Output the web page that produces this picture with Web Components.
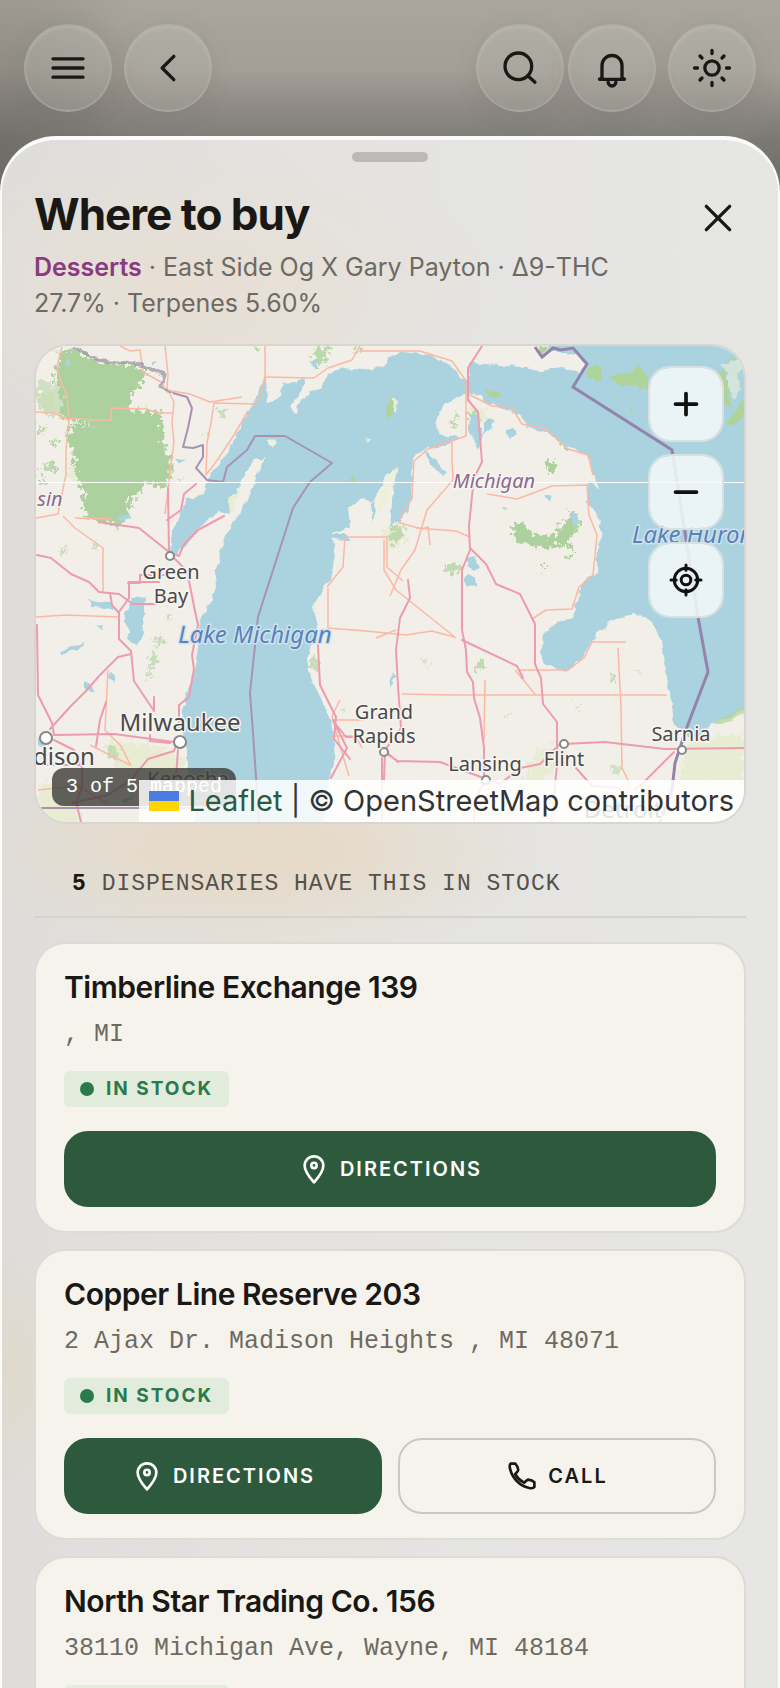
<!DOCTYPE html>
<html lang="en">
<head>
<meta charset="utf-8">
<meta name="viewport" content="width=device-width, initial-scale=1">
<title>Where to buy</title>
<style>
  :root {
    --ink: #1a1815;
    --muted: #6e6a62;
    --green: #2d5a3d;
    --card: #f6f3ec;
    --line: #dedbd5;
    --mono: "Liberation Mono", monospace;
  }
  body {
    margin: 0;
    font-family: Inter, sans-serif;
    color: var(--ink);
  }
</style>
</head>
<body>
<app-shell>
  <top-bar slot="bar"></top-bar>
  <buy-sheet heading="Where to buy">
    <span slot="summary"><strong>Desserts</strong> · East Side Og X Gary Payton · Δ9-THC 27.7% · Terpenes 5.60%</span>
    <store-map></store-map>
    <stock-count count="5">dispensaries have this in stock</stock-count>
    <store-card name="Timberline Exchange 139" address=", MI"></store-card>
    <store-card name="Copper Line Reserve 203" address="2 Ajax Dr. Madison Heights , MI 48071" phone="tel:203"></store-card>
    <store-card name="North Star Trading Co. 156" address="38110 Michigan Ave, Wayne, MI 48184" phone="tel:156"></store-card>
  </buy-sheet>
</app-shell>

<script>
const ICONS = {
  menu: '<path d="M3 6.5h18M3 12h18M3 17.500h18"/>',
  back: '<path d="M15.500 5l-7 7 7 7"/>',
  search: '<circle cx="11" cy="11" r="8"/><path d="M16.800 16.800L21 20.500"/>',
  bell: '<path d="M6 18V10.500a6 6 0 0 1 12 0V18l1.500 0.800h-15z"/><path d="M9.700 20.500a2.300 2.300 0 0 0 4.600 0"/>',
  sun: '<circle cx="12" cy="12" r="4.300"/><path d="M12 1.500v1.800M12 20.700v1.800M1.500 12h1.800M20.700 12h1.800M4.800 4.800L6 6M18 18l1.200 1.200M4.800 19.200L6 18M18 6l1.200-1.200"/>',
  close: '<path d="M5 5l14 14M19 5L5 19"/>',
  plus: '<path d="M12 5v14M5 12h14"/>',
  minus: '<path d="M5 12h14"/>',
  locate: '<circle cx="12" cy="12" r="7.800"/><circle cx="12" cy="12" r="3.200"/><path d="M12 2v3.500M12 18.500V22M2 12h3.500M18.500 12H22"/>',
  pin: '<path d="M12 22C8 17.500 5 13.500 5 9.500a7 7 0 0 1 14 0c0 4-3 8-7 12.500z"/><circle cx="12" cy="9.300" r="2"/>',
  phone: '<path d="M3.500 2.700H7C8.300 4 8.900 5.700 9.200 7.400C9 8.900 7.500 9.500 6.900 10.500C8.500 13.400 10.800 15.600 13.600 17C14.800 16.500 15.200 14.900 16.600 14.700C18.500 15 20 15.500 21.300 16.700V20.300C20.500 21.400 19 21.300 17.500 21C10.400 19.400 4.700 13.800 3 6.500C2.700 5 2.500 3.500 3.500 2.700z"/>'
};

class UiIcon extends HTMLElement {
  constructor() {
    super();
    this.attachShadow({mode: "open"});
  }

  connectedCallback() {
    const width = this.getAttribute("stroke") || 2;
    this.shadowRoot.innerHTML = `
      <style>
        :host { display: block; flex: none; width: 32px; height: 32px; }
        svg { display: block; width: 100%; height: 100%; overflow: visible; }
      </style>
      <svg viewBox="0 0 24 24" fill="none" stroke="currentColor" stroke-width="${width}"
           stroke-linecap="round" stroke-linejoin="round" aria-hidden="true">${ICONS[this.getAttribute("name")]}</svg>`;
  }
}
customElements.define("ui-icon", UiIcon);

class AppShell extends HTMLElement {
  constructor() {
    super();
    this.attachShadow({mode: "open"}).innerHTML = `
      <style>
        :host {
          display: flex;
          flex-direction: column;
          height: 100vh;
          overflow: hidden;
          background:
            radial-gradient(ellipse 160px 260px at 0 150px, rgba(85, 84, 78, .35), transparent),
            radial-gradient(ellipse 60px 90px at 100% 190px, rgba(70, 69, 64, .2), transparent),
            linear-gradient(#aaa69d 0, #a39e96 70px, #8f8b84 108px, #7f7d77 140px, #77756f 200px);
        }
        ::slotted(buy-sheet) { flex: 1; min-height: 0; }
      </style>
      <slot name="bar"></slot>
      <slot></slot>`;
  }
}
customElements.define("app-shell", AppShell);

class TopBar extends HTMLElement {
  constructor() {
    super();
    this.attachShadow({mode: "open"}).innerHTML = `
      <style>
        :host { display: block; padding: 24px; }
        nav { display: flex; align-items: center; gap: 12px; }
        .pair { display: flex; gap: 4px; margin-left: auto; }
        button {
          display: grid;
          place-items: center;
          width: 88px;
          height: 88px;
          padding: 0;
          border: 2px solid rgba(190, 190, 184, .3);
          border-radius: 50%;
          background: linear-gradient(rgba(190, 190, 182, .4), rgba(175, 173, 166, .35));
          box-shadow: inset 0 2px 2px rgba(200, 202, 198, .25), 0 6px 24px rgba(80, 78, 72, .12);
          color: var(--ink);
        }
        ui-icon { width: 40px; height: 40px; }
      </style>
      <nav>
        <button type="button" aria-label="Menu"><ui-icon name="menu"></ui-icon></button>
        <button type="button" aria-label="Back"><ui-icon name="back"></ui-icon></button>
        <div class="pair">
          <button type="button" aria-label="Search"><ui-icon name="search"></ui-icon></button>
          <button type="button" aria-label="Notifications"><ui-icon name="bell"></ui-icon></button>
        </div>
        <button type="button" aria-label="Theme"><ui-icon name="sun"></ui-icon></button>
      </nav>`;
  }
}
customElements.define("top-bar", TopBar);

class BuySheet extends HTMLElement {
  constructor() {
    super();
    this.attachShadow({mode: "open"});
  }

  connectedCallback() {
    this.shadowRoot.innerHTML = `
      <style>
        :host {
          display: block;
          box-sizing: border-box;
          overflow: hidden;
          padding: 12px 32px 0;
          border: 2px solid #fbfbfa;
          border-top-width: 4px;
          border-bottom: 0;
          border-radius: 56px 56px 0 0;
          background:
            radial-gradient(ellipse 300px 110px at 250px 710px, #e6dac8 20%, rgba(230, 218, 200, 0)),
            radial-gradient(ellipse 320px 150px at 180px 150px, #e8dfd4 0%, rgba(232, 223, 212, 0)),
            radial-gradient(ellipse 60px 140px at 10px 1230px, #e0d9cc, rgba(224, 217, 204, 0)),
            linear-gradient(90deg, #dedddb 0, #e4e3e0 40%, #e6e6e5 100%);
        }
        .handle {
          width: 76px;
          height: 10px;
          margin: 0 auto 26px;
          border-radius: 5px;
          background: #bcbab7;
        }
        header { display: flex; align-items: center; justify-content: space-between; }
        h1 {
          margin: 0;
          font-size: 44px;
          line-height: 52px;
          font-weight: 700;
          letter-spacing: -1px;
        }
        .close {
          display: grid;
          place-items: center;
          width: 56px;
          height: 52px;
          padding: 8px 0 0;
          border: 0;
          background: none;
          color: inherit;
        }
        .close ui-icon { width: 40px; height: 40px; }
        .summary {
          max-width: 600px;
          margin: 9px 0 23px;
          font-size: 25px;
          line-height: 36px;
          color: var(--muted);
        }
        ::slotted(store-card) { margin-bottom: 16px; }
      </style>
      <div class="handle"></div>
      <header>
        <h1>${this.getAttribute("heading")}</h1>
        <button type="button" class="close" aria-label="Close"><ui-icon name="close"></ui-icon></button>
      </header>
      <p class="summary"><slot name="summary"></slot></p>
      <slot></slot>`;
    const strong = this.querySelector("strong");
    if (strong) strong.style.cssText = "font-weight:600;color:#8a3a80";
  }
}
customElements.define("buy-sheet", BuySheet);

// The drawing uses one unit per CSS pixel at the 780px layout.
class StoreMap extends HTMLElement {
  constructor() {
    super();
    this.attachShadow({mode: "open"});
  }

  connectedCallback() {
    this.shadowRoot.innerHTML = `
      <style>
        :host {
          display: block;
          position: relative;
          box-sizing: border-box;
          height: 480px;
          overflow: hidden;
          border: 2px solid #d9d6d0;
          border-radius: 34px;
          background: #f2efe9;
        }
        svg.tiles { display: block; width: 100%; height: 100%; }
        .tiles text {
          font-family: "Noto Sans", sans-serif;
          fill: #4a4a4a;
          stroke: #f7f5f1;
          stroke-width: 3px;
          stroke-linejoin: round;
          paint-order: stroke;
          text-anchor: middle;
        }
        .tiles .state { font-style: italic; fill: #8a6a90; }
        .tiles .lake { font-style: italic; fill: #5b80bb; stroke: #cfe4ec; }
        .tiles .start { text-anchor: start; }
        .controls {
          position: absolute;
          top: 20px;
          right: 20px;
          display: grid;
          gap: 12px;
        }
        .controls button {
          display: grid;
          place-items: center;
          width: 76px;
          height: 76px;
          padding: 0;
          border: 2px solid #d8e0e0;
          border-radius: 22px;
          background: rgba(247, 250, 252, .84);
          background-clip: padding-box;
          color: #111;
        }
        .controls ui-icon { width: 36px; height: 36px; }
        .chip {
          position: absolute;
          left: 16px;
          bottom: 16px;
          padding: 0 14px;
          border-radius: 12px;
          background: rgba(60, 59, 56, .8);
          color: #fff;
          font: 20px/38px var(--mono);
        }
        .credit {
          position: absolute;
          right: 0;
          bottom: 0;
          display: flex;
          align-items: center;
          padding: 0 10px;
          background: rgba(255, 255, 255, .84);
          color: #333;
          font-size: 29px;
          line-height: 42px;
          white-space: pre;
        }
        .credit a { color: inherit; text-decoration: none; }
        .credit .leaflet { color: var(--green); }
        .flag {
          width: 30px;
          height: 20px;
          margin-right: 9px;
          background: linear-gradient(#4c7be1 50%, #ffd500 50%);
        }
      </style>
      <svg class="tiles" viewBox="36 346 708 476" preserveAspectRatio="xMidYMid slice" role="img" aria-label="Map of Michigan">
        <defs>
          <filter id="coast" x="0" y="0" width="1" height="1">
            <feTurbulence type="fractalNoise" baseFrequency=".12" numOctaves="2" seed="4"/>
            <feDisplacementMap in="SourceGraphic" scale="6" xChannelSelector="R" yChannelSelector="G"/>
          </filter>
          <filter id="woods" x="-.1" y="-.1" width="1.2" height="1.2">
            <feTurbulence type="fractalNoise" baseFrequency=".2" numOctaves="3" seed="9"/>
            <feDisplacementMap in="SourceGraphic" scale="18" xChannelSelector="R" yChannelSelector="G"/>
          </filter>
        </defs>
        <rect x="-200" y="200" width="1200" height="800" fill="#f2efe9"/>

        <g filter="url(#woods)">
          <g fill="#e4eccb" opacity=".7">
            <path d="M104 742l22-2 34 8 26 12-4 16-36 4-30-10zM40 780l40 10v32H40zM690 740l54-6v50l-66 2zM536 750l22-4 2 14-24 30-16 2zM38 390l14 4 6 18-20-2z"/>
            <path d="M384 528l18-3 6 14-14 10-10-2zM310 600l5-4-1 18zM226 484l12 4-4 22-8-4zM68 460l14 2-2 20-12-4zM470 404l18 6-6 14-14-4z"/>
          </g>
          <!-- forest -->
          <g fill="#add19e">
            <path d="M64 352l8-4 14 6 14 8 16 2 20 1 10 7-6 12-6 8-3 14-2 12-14 2-10-2-4 6-14-1-18-2-8-4 2-14-6-16-4-10 6-14 2-8-10-4z"/>
            <path d="M70 424l24 0 14-8 6-5h45l3 18 3 20 6 22-4 14-14 2-10-6-3 10-9 12-4 16-8 9-18-6-14-4-4-12 1-14-8-14-2-22-6-16z"/>
            <path opacity=".5" d="M38 380l12 2 12 10 4 16-4 10-14-4-10-4zM150 463l12-10 10 6 2 12-14 4z"/>
            <path d="M40 466l8-4 8 4v6l-12 1zM38 480l10 2-3 4h-7zM38 427l8 2-6 5zM47 442l12-4-2 8z" opacity=".8"/>
            <path d="M313 352l10-6 6 4-2 10-8 8-4-6zM352 350l8-4-2 8zM252 348l8-2v4z" opacity=".8"/>
            <path d="M220 410l8-4-3 10-4 2zM205 434l6-3-4 6zM177 478l6 1-3 3z" opacity=".6"/>
            <path d="M510 526l12-4 10 12 20 2 8-10 12-14 6 8-2 12-8 6 4 10-14-4-14 4-18-4-12-6z"/>
            <path d="M547 462l8-3 2 8-2 6-8-2zM567 555l8 1-3 4-6-1zM538 565h10l-3 4zM560 442l8 2-3 4-6-1z"/>
            <path d="M390 530l8-6 6 6-4 12-12 2zM443 566l14-4 6 6-8 6-10-2zM476 664l8-6v10l-10 2zM452 418l5-4-2 12-4 2zM468 412l8-2 2 10-6 4z" opacity=".7"/>
            <path d="M314 652l6 10-1 14-7-8-2-8zM340 710l6-2-3 5zM575 704l6 3-3 4zM505 713l8 1-4 3zM611 676l6-3v8l-4 2zM636 670l8 1-4 2zM424 660l3-2-1 12zM60 550l8-2-5 6zM92 544l6-2-2 8-5-2z" opacity=".6"/>
            <path d="M152 640l10-4 4 6-8 4zM150 656l8-4-4 18-6 10zM167 615l6-3-4 10zM106 748l14 0-4 14-8-4z" opacity=".6"/>
            <path d="M612 764l10 2-4 8-8-2z" opacity=".5"/>
          </g>
        </g>

        <g filter="url(#coast)">
          <!-- lakes Michigan and Huron -->
          <path fill="#aad3df" d="M170 551L172 533L180 515L187 499L205 495L207 479L220 463L233 442L247 413L257 399L260 385L266 376L267 403L277 400L282 388L283 382L293 383L305 378L302 390L290 406L295 413L300 402L310 392L322 388L327 375L343 368L363 370L383 367L391 356L400 352L430 355L450 365L460 376L468 382L470 362L484 365L500 366L527 367L540 371L560 367L570 370L580 373L585 366L580 356L567 352L550 352L545 340H754V703L730 717L713 722L708 728L700 738L688 736L680 727L673 725L670 695L663 657L661 640L652 622L640 615L633 614L613 620L598 632L590 645L583 658L565 672L545 663L540 652L543 640L545 632L557 622L572 618L577 600L582 585L588 578L597 573L598 548L602 532L597 515L587 502L588 490L590 482L600 489L593 475L590 458L580 450L560 443L547 432L527 428L522 417L507 410L490 405L480 397L468 394L458 397L445 405L435 422L440 435L460 438L447 446L427 448L413 457L412 482L410 502L404 515L400 522L390 527L393 492L397 470L393 470L387 475L377 495L372 503L363 498L348 507L350 527L343 530L332 533L335 552L332 575L323 588L313 607L318 625L307 657L310 677L322 700L333 727L335 760L330 780L322 830H197L193 790L187 767V750L182 730L183 707L193 677L198 647L200 617L212 600L216 587L215 575L220 552L230 525L237 517L250 495L258 472L265 457L255 460L242 478L237 493L228 498L230 515L220 512L210 517L197 532L183 547L178 553z"/>
          <g fill="#aad3df">
            <path d="M132 598l13-1-2 20 1 16-7 12-7-3-2-15-5-7zM89 600l8 2 14 1 6 8-10-3-16-1z"/>
            <path d="M60 652l12-5 14-6-8 8-18 6zM98 626l4-1-2 6zM84 682l6 2 5 8-5 0-6-4zM110 670l5 8-2 4-4-6zM116 516l12-1 4 3-12 3zM38 738l8-6 4 8-4 8-8-3zM120 800l14-3-8 7z"/>
            <path d="M470 415l8-2 1 14 4 8-6 14-4-12-4-6zM484 424l6-6 4 2-6 12-5 2zM506 430l8-2 3 6-6 4-5-4zM571 512l6 2 2 10-6 2zM544 498l8-3-2 6zM466 558l8-2 6 12-6 4-6-6zM468 574l8 4 1 8-10-1-4-4zM502 508l6 1-4 2z"/>
            <path d="M424 450l8 8 6 3 2 6 6 4-2 5-8-6-6-6zM408 470l3 28-3 16-3-6zM395 500l3 18-6-6zM332 534h12l8 6-6 2-14-4zM370 505l6-4-3 22zM310 361l8-2-2 10zM176 459l10 1-6 3zM390 680l4-8 2 4-6 12zM152 362l5-2-5 6zM66 360l6 1-4 8z"/>
          </g>
          <!-- islands -->
          <g fill="#eef0dc">
            <path d="M268 440l8-2 1 5-5 5-4-2zM366 436l3 4-2 4zM392 397l4 2-1 14-3-2z"/>
            <path d="M388 474l10-8-4 14-10 26-6 10 0-14z"/>
            <path d="M720 364l8 10-2 10 8 16 6-10-2-18 8-6v-8z" opacity=".6"/>
          </g>
          <g fill="#afd49a">
            <path d="M388 404l4-10 2 12-4 12-5-1zM350 477l4-1 2 6-5 2zM339 488l4 1-2 4z"/>
            <path d="M486 390l12 2 4 5-8 1-8-4zM588 368l8-4 6 5v9l-6 4-8-4zM609 376l12-2 10-2 8-6 8 8v16l-14-4-12 0-8-6z"/>
            <path d="M718 372l8-2 2 24 4 16-8-8-6-12zM728 420l8-10 10-14v18l-10 10-8 2zM538 346l10 1-4 8-5-2zM726 360l12-2-2 4zM738 432l5-4-2 6zM696 358l3 2-3 2zM630 405l3 4-2 3z"/>
            <path d="M714 722l12-6 20-12v8l-16 10-14 2z" opacity=".7"/>
          </g>
        </g>

        <!-- secondary roads -->
        <g fill="none" stroke="#fbb8a4" stroke-width="1.500" stroke-linejoin="round">
          <path d="M62 347l-5 20 4 14 6 16 2 21 25 2h17v-12l36 1 10 4h16M36 412l18 1 15 7-3 30v24l-8 40-22 4M120 346l10 5 10-1 3 22 18 10 5 8 24 4 20 8 32-5M165 346l3 28-1 14 7 14-2 20 2 20-5 38"/>
          <path d="M265 346v30l-4 20-7 8-40-1-3 20-4 20-1 32 12-16 16-24 14-24M266 377l48 1 14-10 24-8 8-14M360 351h60l32 10 14 20M63 516l12 12 28 20v45M75 518l36 1M168 488l2-14-5 40"/>
          <path d="M468 394l24 12 20 2 10 16 24 5 22 20 20 6 5 20M466 382v54l-38 13-14 12-2 36-12 22M452 440v20l1 20-26 30-12 40-14 20-11 26M416 528l40 3 14 6M487 494l30 5 35-13 35-1 2 30 8 20-4 40-14 12-7 22-26 1-14 9"/>
          <path d="M400 523l22 6 6-2 2 18M384 540v30l12 20 60 48M345 537h42v30l16 14M345 537l-2 30-16 20M328 588v40l38 3 40 4 26-4 22 6M402 694l50 1h215M396 630l-20 8M520 670h48l16-12 8-16h34M618 648l3 60 1 60 6 12-2 30M515 670l20 24"/>
          <path d="M36 617l30-2 52 2M108 670l-3 60 16 16 10 20M334 720h30M332 736h24l6 12M340 700l-8 16 8 30 9 30M90 745l40 20M485 680l-1 60M38 790l40-4 30 18"/>
        </g>
        <!-- trunk roads -->
        <g fill="none" stroke="#ee9bb0" stroke-width="2" stroke-linejoin="round" stroke-linecap="round">
          <path d="M168 488l1 64-30-24-40-6M169 552l10 4 5-12 14-14 26-14M167 520l14-10 3-16 12-10M169 553l18 18 8 40 3 14-6 30 2 14-5 28-10 8v26"/>
          <path d="M37 555l14 3 20 16 18 8 10 10 20 2 14 10 23 0M110 593l2 12 7 8v26l12 12 3 30 20 30v-14M131 654l-13 3-18 18-14 16-16 16-20 22M37 625l1 70 14 28 2 12 60-1 60 8 6 3M128 583h12v-8h28M119 612l10-14v-16h30"/>
          <path d="M54 740l20 10 8 18v20l-6 14 5 20M176 745l-2 6-26 8-16 20-24 16-36 8M178 750l-3 40M150 735v6l20 2M38 765l44 0M96 746l4-26 6-18"/>
          <path d="M482 346l-14 22v32l10 12 4 50-8 16-2 18-3 30 1 24-8 20v60l4 20 1 22 6 10 1 16 6 20 4 30v34"/>
          <path d="M470 548l16 16 10 20 24 10 15 30v40l6 14 2 26 14 18v34M462 640l55 26 6 12M408 580l2 18-10 20-4 32 2 36 3 42-16 22-1 30"/>
          <path d="M563 744l42-2 60 7 80-1M560 744l-20 20-20 4-20 16-60-22-42-1-16-10M557 765l-6 60M576 768l16 18 30 2M674 752l-30 30-10 8M333 720l14 28-16 30M318 645l2 40 16 32-2 22 16 20M334 722l12 15h14M382 758v62M486 780l-12 20v20M384 750l14 12"/>
        </g>

        <!-- borders -->
        <g fill="none" stroke="#a892b4" stroke-width="2" stroke-linejoin="round">
          <path stroke="#a09aa6" stroke-width="3" opacity=".8" filter="url(#coast)" d="M73 347L85 353L97 360L117 363L133 362L148 368L165 375L160 387L173 393"/>
          <path d="M173 393L187 397L192 408L188 428L183 447L193 448L203 445V457L196 468L207 480L223 482L227 467L247 450L255 436H285L332 463L310 482L293 508L265 595L258 617L250 693L253 733L259 822M36 808H190"/>
        </g>
        <path fill="none" stroke="#9484ac" stroke-width="3" d="M535 347L542 357L553 348L561 350L573 348L587 364L573 387L672 450L680 500L698 617L708 672L687 727L675 763L672 790L660 822"/>
        <g fill="#fff" stroke="#888" stroke-width="2">
          <circle cx="170" cy="556" r="4"/><circle cx="46" cy="738" r="6"/><circle cx="180" cy="742" r="6"/>
          <circle cx="384" cy="752" r="4"/><circle cx="486" cy="780" r="4"/><circle cx="564" cy="744" r="4"/><circle cx="682" cy="750" r="4"/>
        </g>
        <path d="M36 482.500h708" stroke="#fff" stroke-width="1"/>

        <text class="state" x="494" y="488" font-size="20">Michigan</text>
        <text class="state" x="50" y="506" font-size="20">sin</text>
        <text class="lake" x="255" y="643" font-size="24">Lake Michigan</text>
        <text class="lake start" x="632" y="543" font-size="24">Lake Huron</text>
        <text x="171" y="579" font-size="20">Green</text>
        <text x="171" y="603" font-size="20">Bay</text>
        <text x="180" y="731" font-size="24">Milwaukee</text>
        <text x="64" y="765" font-size="24">dison</text>
        <text x="384" y="719" font-size="20">Grand</text>
        <text x="384" y="743" font-size="20">Rapids</text>
        <text x="485" y="771" font-size="20">Lansing</text>
        <text x="564" y="766" font-size="20">Flint</text>
        <text x="681" y="741" font-size="20">Sarnia</text>
        <text x="188" y="786" font-size="20">Kenosha</text>
        <text x="623" y="818" font-size="24">Detroit</text>
      </svg>
      <div class="chip">3 of 5 mapped</div>
      <div class="credit"><span class="flag"></span><a class="leaflet" href="#">Leaflet</a> | © <a href="#">OpenStreetMap</a> contributors</div>
      <div class="controls">
        <button type="button" aria-label="Zoom in"><ui-icon name="plus" stroke="2.500"></ui-icon></button>
        <button type="button" aria-label="Zoom out"><ui-icon name="minus" stroke="2.500"></ui-icon></button>
        <button type="button" aria-label="My location"><ui-icon name="locate"></ui-icon></button>
      </div>`;
  }
}
customElements.define("store-map", StoreMap);

class StockCount extends HTMLElement {
  constructor() {
    super();
    this.attachShadow({mode: "open"});
  }

  connectedCallback() {
    this.shadowRoot.innerHTML = `
      <style>
        :host {
          display: block;
          margin-bottom: 24px;
          padding: 44px 38px 16px;
          border-bottom: 2px solid #d6d3ce;
          font: 23px/32px var(--mono);
          letter-spacing: 1px;
          text-transform: uppercase;
          color: #55514a;
        }
        b { color: var(--ink); }
      </style>
      <b>${this.getAttribute("count")}</b> <slot></slot>`;
  }
}
customElements.define("stock-count", StockCount);

class StoreCard extends HTMLElement {
  constructor() {
    super();
    this.attachShadow({mode: "open"});
  }

  connectedCallback() {
    const phone = this.getAttribute("phone");
    this.shadowRoot.innerHTML = `
      <style>
        :host {
          display: block;
          padding: 24px 28px;
          border: 2px solid var(--line);
          border-radius: 32px;
          background: var(--card);
        }
        h2 {
          margin: 0 0 12px;
          font-size: 30px;
          line-height: 38px;
          font-weight: 600;
          letter-spacing: -0.015em;
        }
        p {
          margin: 0 0 20px;
          font: 25px/33px var(--mono);
          color: var(--muted);
        }
        .badge {
          display: flex;
          align-items: center;
          gap: 12px;
          width: fit-content;
          padding: 0 16px;
          border-radius: 6px;
          background: #e1ecdc;
          color: #2b7a4b;
          font-size: 19px;
          line-height: 36px;
          font-weight: 700;
          letter-spacing: 2px;
        }
        .badge::before {
          content: "";
          width: 14px;
          height: 14px;
          border-radius: 50%;
          background: currentColor;
        }
        .actions { display: flex; gap: 16px; margin-top: 24px; }
        a {
          flex: 1;
          display: flex;
          align-items: center;
          justify-content: center;
          gap: 10px;
          box-sizing: border-box;
          height: 76px;
          border: 2px solid #cbc8c2;
          border-radius: 24px;
          color: inherit;
          font-size: 20px;
          font-weight: 600;
          letter-spacing: 2px;
          text-decoration: none;
        }
        .primary { border-color: var(--green); background: var(--green); color: #fff; }
      </style>
      <h2>${this.getAttribute("name")}</h2>
      <p>${this.getAttribute("address")}</p>
      <div class="badge">IN STOCK</div>
      <div class="actions">
        <a class="primary" href="#"><ui-icon name="pin"></ui-icon>DIRECTIONS</a>
        ${phone ? `<a href="${phone}"><ui-icon name="phone"></ui-icon>CALL</a>` : ""}
      </div>`;
  }
}
customElements.define("store-card", StoreCard);
</script>
</body>
</html>
